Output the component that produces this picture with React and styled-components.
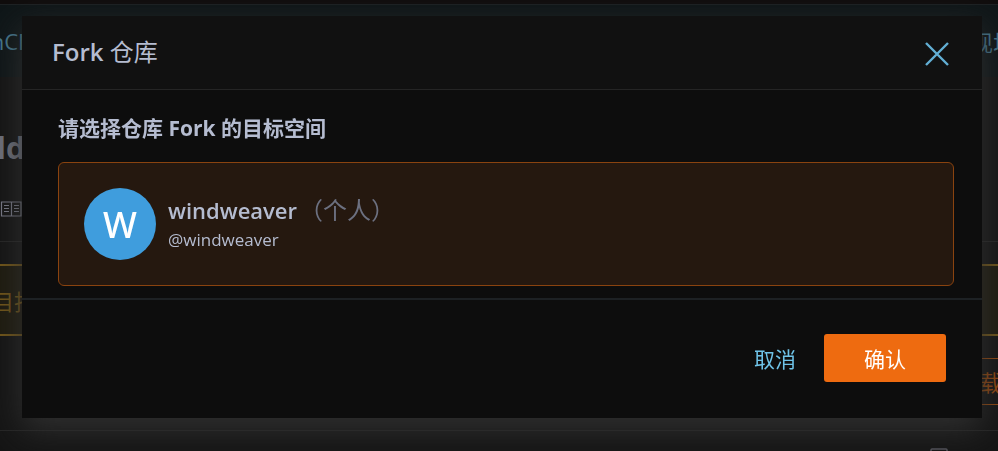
import styled, { createGlobalStyle } from "styled-components";

const GlobalStyle = createGlobalStyle`
  * {
    box-sizing: border-box;
  }
  body {
    margin: 0;
    background: #151515;
    color: #b5bcd0;
    font-family: "Open Sans", "Noto Sans CJK SC", sans-serif;
  }
  h1,
  h2,
  p {
    margin: 0;
  }
`;

const Page = styled.div`
  height: 100vh;
  overflow: hidden;
  background: #151515;
`;

const TopStrip = styled.div`
  height: 5px;
  background: #100d0d;
  border-bottom: 1px solid #1d2123;
`;

const Row = styled.div`
  display: flex;
  align-items: center;
  justify-content: space-between;
  overflow: hidden;
  white-space: nowrap;
`;

const NavBar = styled(Row)`
  height: 72px;
  background: #0f1618;
  a {
    color: #46788f;
    font-size: 22px;
    text-decoration: none;
  }
`;

/* parts that run past the edge of the window */
const Edge = styled.div`
  display: flex;
  justify-content: ${(p) => (p.$side === "left" ? "flex-end" : "flex-start")};
  width: ${(p) => p.$width}px;
`;

const TitleRow = styled(Row)`
  height: 100px;
  padding-top: 40px;
  color: #70737e;
`;

const RepoTitle = styled.h1`
  font-size: 30px;
  font-weight: 700;
`;

const TabRow = styled(Row)`
  height: 65px;
  border-bottom: 1px solid #262626;
`;

const Notice = styled(Row)`
  height: 72px;
  margin: 22px 0;
  background: #1e1b0f;
  border: solid #735719;
  border-width: 2px 0;
  color: #735719;
  font-size: 22px;
`;

const ActionRow = styled(Row)`
  justify-content: flex-end;
  height: 73px;
  padding-bottom: 26px;
  border-bottom: 1px solid #262626;
`;

const DownloadButton = styled.button`
  width: 48px;
  height: 47px;
  padding: 0 0 0 8px;
  overflow: hidden;
  background: transparent;
  border: solid #96490f;
  border-width: 1px 0;
  color: #96490f;
  font: inherit;
  font-size: 22px;
  text-align: left;
  white-space: nowrap;
`;

const FooterRow = styled(Row)`
  justify-content: flex-end;
  align-items: flex-start;
  height: 20px;
  padding: 17px 50px 0 0;
`;

const Overlay = styled.div`
  position: fixed;
  inset: 0;
  padding: 16px 16px 33px 22px;
`;

const Dialog = styled.section`
  display: flex;
  flex-direction: column;
  height: 100%;
  background: #0d0d0d;
  box-shadow: 0 12px 32px 0 #303030;
`;

const DialogHeader = styled.header`
  display: flex;
  align-items: center;
  justify-content: space-between;
  height: 74px;
  padding: 0 33px 0 30px;
  background: #111111;
  border-bottom: 1px solid #252525;
`;

const DialogTitle = styled.h2`
  padding-bottom: 2px;
  font-size: 24px;
  font-weight: 400;
  line-height: 32px;
  b {
    font-weight: 600;
  }
`;

const CloseButton = styled.button`
  display: flex;
  padding: 2px 0 0;
  background: none;
  border: 0;
  color: #62afd4;
  cursor: pointer;
`;

const DialogBody = styled.div`
  padding: 24px 28px 12px 36px;
  border-bottom: 2px solid #1d2124;
`;

const Prompt = styled.p`
  margin-bottom: 20px;
  font-size: 21px;
  font-weight: 700;
  line-height: 28px;
`;

const SpaceCard = styled.button`
  display: flex;
  align-items: center;
  gap: 12px;
  width: 100%;
  height: 124px;
  padding: 0 25px;
  background: #25180f;
  border: 1px solid #8a430f;
  border-radius: 6px;
  color: inherit;
  font: inherit;
  text-align: left;
  cursor: pointer;
`;

const Avatar = styled.span`
  display: grid;
  place-items: center;
  width: 72px;
  height: 72px;
  border-radius: 50%;
  background: #3f9ddd;
  color: #ffffff;
  font-family: "Noto Sans", sans-serif;
  font-size: 36px;
  font-weight: 500;
`;

const SpaceText = styled.span`
  display: flex;
  flex-direction: column;
`;

const SpaceName = styled.span`
  font-size: 22px;
  font-weight: 600;
  line-height: 32px;
`;

const SpaceKind = styled.span`
  margin-left: 2px;
  color: #6c7080;
  font-size: 24px;
  font-weight: 400;
`;

const Handle = styled.span`
  font-size: 17px;
  line-height: 28px;
`;

const DialogFooter = styled.footer`
  display: flex;
  justify-content: flex-end;
  gap: 28px;
  padding: 34px 36px;
`;

const Button = styled.button`
  height: 48px;
  padding: ${(p) => (p.$primary ? "0 40px" : "0")};
  background: ${(p) => (p.$primary ? "#ee6b10" : "transparent")};
  border: 0;
  border-radius: 3px;
  color: ${(p) => (p.$primary ? "#ffffff" : "#6fc3e8")};
  font: inherit;
  font-size: 21px;
  cursor: pointer;
`;

const CloseIcon = () => (
  <svg width="24" height="24" viewBox="0 0 24 24" fill="none" stroke="currentColor" strokeWidth="2.4">
    <path d="M1 1L23 23M23 1L1 23" />
  </svg>
);

const BookIcon = () => (
  <svg width="22" height="16" viewBox="0 0 22 16" fill="none" stroke="#7b7d8a" strokeWidth="1.2">
    <path d="M1.5 1H21V15H1.5ZM11.5 1V15" />
    <path d="M4 4.5H9M4 7.5H9M4 10.5H9M14 4.5H19M14 7.5H19M14 10.5H19" />
  </svg>
);

const BoxIcon = () => (
  <svg width="18" height="18" viewBox="0 0 18 18" fill="none" stroke="#55565e" strokeWidth="1.5">
    <rect x="1" y="1" width="16" height="16" rx="1" />
  </svg>
);

const RepoPage = () => (
  <Page>
    <TopStrip />
    <NavBar>
      <Edge $side="left" $width={36}>
        <a href="#repo">nCla</a>
      </Edge>
      <Edge $side="right" $width={27}>
        <a href="#live">现场</a>
      </Edge>
    </NavBar>
    <TitleRow>
      <Edge $side="left" $width={25}>
        <RepoTitle>ld</RepoTitle>
      </Edge>
    </TitleRow>
    <TabRow>
      <BookIcon />
    </TabRow>
    <Notice>
      <Edge $side="left" $width={36}>
        目指
      </Edge>
    </Notice>
    <ActionRow>
      <DownloadButton>下载</DownloadButton>
    </ActionRow>
    <FooterRow>
      <BoxIcon />
    </FooterRow>
  </Page>
);

const App = () => {
  return (
    <>
      <GlobalStyle />
      <RepoPage />
      <Overlay>
        <Dialog role="dialog" aria-labelledby="fork-title">
          <DialogHeader>
            <DialogTitle id="fork-title">
              <b>Fork</b> 仓库
            </DialogTitle>
            <CloseButton aria-label="关闭">
              <CloseIcon />
            </CloseButton>
          </DialogHeader>
          <DialogBody>
            <Prompt>请选择仓库 Fork 的目标空间</Prompt>
            <SpaceCard>
              <Avatar>W</Avatar>
              <SpaceText>
                <SpaceName>
                  windweaver<SpaceKind>（个人）</SpaceKind>
                </SpaceName>
                <Handle>@windweaver</Handle>
              </SpaceText>
            </SpaceCard>
          </DialogBody>
          <DialogFooter>
            <Button>取消</Button>
            <Button $primary>确认</Button>
          </DialogFooter>
        </Dialog>
      </Overlay>
    </>
  );
};

export default App;
